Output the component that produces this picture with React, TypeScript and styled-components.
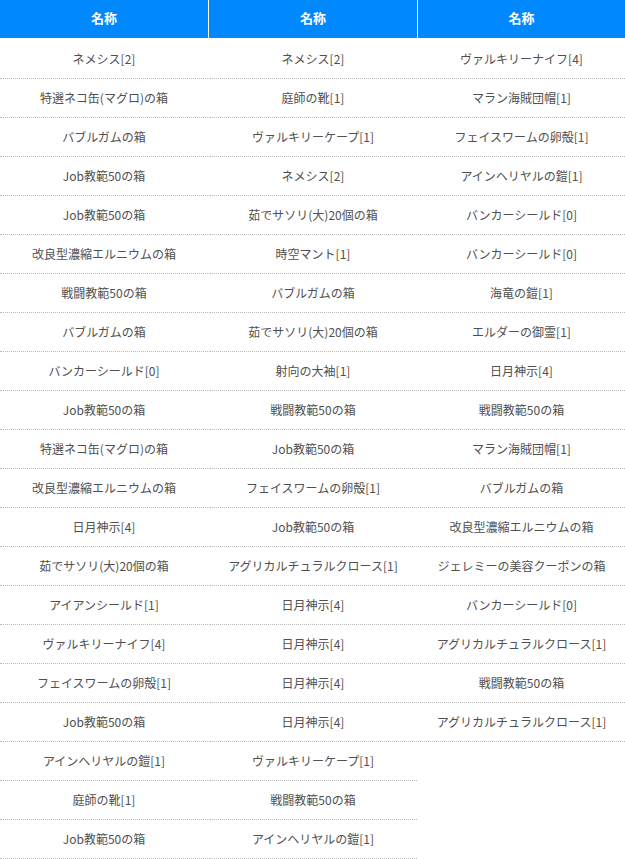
import styled, { createGlobalStyle } from 'styled-components';

const columns: string[][] = [
   [
      'ネメシス[2]',
      '特選ネコ缶(マグロ)の箱',
      'バブルガムの箱',
      'Job教範50の箱',
      'Job教範50の箱',
      '改良型濃縮エルニウムの箱',
      '戦闘教範50の箱',
      'バブルガムの箱',
      'バンカーシールド[0]',
      'Job教範50の箱',
      '特選ネコ缶(マグロ)の箱',
      '改良型濃縮エルニウムの箱',
      '日月神示[4]',
      '茹でサソリ(大)20個の箱',
      'アイアンシールド[1]',
      'ヴァルキリーナイフ[4]',
      'フェイスワームの卵殻[1]',
      'Job教範50の箱',
      'アインヘリヤルの鎧[1]',
      '庭師の靴[1]',
      'Job教範50の箱',
   ],
   [
      'ネメシス[2]',
      '庭師の靴[1]',
      'ヴァルキリーケープ[1]',
      'ネメシス[2]',
      '茹でサソリ(大)20個の箱',
      '時空マント[1]',
      'バブルガムの箱',
      '茹でサソリ(大)20個の箱',
      '射向の大袖[1]',
      '戦闘教範50の箱',
      'Job教範50の箱',
      'フェイスワームの卵殻[1]',
      'Job教範50の箱',
      'アグリカルチュラルクロース[1]',
      '日月神示[4]',
      '日月神示[4]',
      '日月神示[4]',
      '日月神示[4]',
      'ヴァルキリーケープ[1]',
      '戦闘教範50の箱',
      'アインヘリヤルの鎧[1]',
   ],
   [
      'ヴァルキリーナイフ[4]',
      'マラン海賊団帽[1]',
      'フェイスワームの卵殻[1]',
      'アインヘリヤルの鎧[1]',
      'バンカーシールド[0]',
      'バンカーシールド[0]',
      '海竜の鎧[1]',
      'エルダーの御霊[1]',
      '日月神示[4]',
      '戦闘教範50の箱',
      'マラン海賊団帽[1]',
      'バブルガムの箱',
      '改良型濃縮エルニウムの箱',
      'ジェレミーの美容クーポンの箱',
      'バンカーシールド[0]',
      'アグリカルチュラルクロース[1]',
      '戦闘教範50の箱',
      'アグリカルチュラルクロース[1]',
   ],
];

const App = () => {
   return (
      <>
         <GlobalStyle />
         <Board>
            {columns.map((items, i) => (
               <Column key={i}>
                  <HeadCell>名称</HeadCell>
                  <Body>
                     {items.map((name, j) => (
                        <ItemRow key={j}>{name}</ItemRow>
                     ))}
                  </Body>
               </Column>
            ))}
         </Board>
      </>
   );
};
export default App;

const GlobalStyle = createGlobalStyle`
   body {
      margin: 0;
      background: #fff;
      font-family: 'Noto Sans CJK JP', 'Noto Sans', sans-serif;
   }
`;

const Board = styled.div`
   display: grid;
   grid-template-columns: 208px 208px 207px;
   column-gap: 1px;
   width: 625px;
   align-items: start;
`;

const Column = styled.div`
   display: flex;
   flex-direction: column;
`;

const HeadCell = styled.div`
   height: 38px;
   box-sizing: border-box;
   padding-bottom: 3px;
   display: flex;
   align-items: center;
   justify-content: center;
   background-color: #0088ff;
   color: #fff;
   font-size: 13px;
   line-height: 1;
   font-weight: bold;
`;

const Body = styled.div`
   display: flex;
   flex-direction: column;
   padding-top: 2px;
`;

const ItemRow = styled.div`
   height: 38px;
   box-sizing: content-box;
   display: flex;
   align-items: center;
   justify-content: center;
   padding-bottom: 0;
   border-bottom: 1px dotted #bbb;
   color: #505050;
   font-size: 12px;
   line-height: 1;
   white-space: nowrap;
   & > span {
      display: block;
   }
`;
